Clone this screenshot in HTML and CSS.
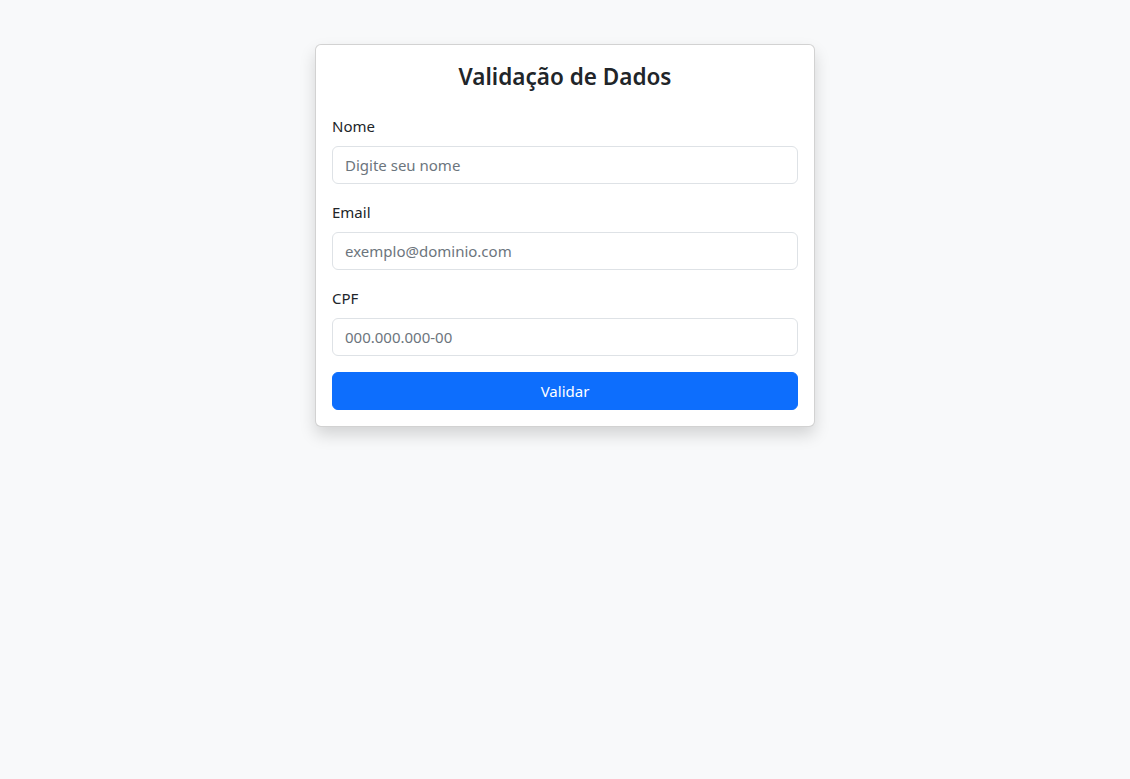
FILE: index.html
```html
<!DOCTYPE html>
<html lang="pt-BR">
<head>
<meta charset="utf-8">
<title>Validação de Dados</title>
<link rel="stylesheet" href="styles.css">
</head>
<body>
<main class="page">
  <form class="card">
    <h4 class="card-title">Validação de Dados</h4>
    <div class="field">
      <label class="label" for="nome">Nome</label>
      <input class="input" id="nome" type="text" placeholder="Digite seu nome">
    </div>
    <div class="field">
      <label class="label" for="email">Email</label>
      <input class="input" id="email" type="text" placeholder="exemplo@dominio.com">
    </div>
    <div class="field">
      <label class="label" for="cpf">CPF</label>
      <input class="input" id="cpf" type="text" placeholder="000.000.000-00">
    </div>
    <button class="btn" type="button">Validar</button>
  </form>
</main>
</body>
</html>
```

FILE: styles.css
```css
* { box-sizing: border-box; }
html, body { margin: 0; padding: 0; }
body {
  background: #f8f9fa;
  font-family: "Noto Sans", "Open Sans", sans-serif;
  font-size: 16px;
  line-height: 1.5;
  color: #212529;
  min-height: 100vh;
}
.page {
  display: flex;
  justify-content: center;
  align-items: flex-start;
  padding: 44px 0 60px;
  min-height: 100vh;
}
.card {
  width: 500px;
  background: #fff;
  border: 1px solid rgba(0,0,0,0.175);
  border-radius: 6px;
  padding: 16px;
  box-shadow: 0 8px 16px rgba(0,0,0,0.15);
  display: flex;
  flex-direction: column;
}
.card-title {
  margin: 2px 0 22px;
  font-size: 22.5px;
  line-height: 28.8px;
  font-weight: 600;
  text-align: center;
  color: #212529;
}
.field {
  display: flex;
  flex-direction: column;
  margin-bottom: 16px;
}
.label {
  font-size: 15px;
  line-height: 24px;
  margin-bottom: 8px;
}
.input {
  height: 38px;
  padding: 6px 12px;
  border: 1px solid #dee2e6;
  border-radius: 6px;
  font-family: inherit;
  font-size: 15px;
  color: #212529;
  background: #fff;
  outline: none;
}
.input::placeholder { color: #6c757d; opacity: 1; }
.btn {
  height: 38px;
  border: 1px solid #0d6efd;
  border-radius: 6px;
  background: #0d6efd;
  color: #fff;
  font-family: inherit;
  font-size: 15px;
  cursor: pointer;
}
```
